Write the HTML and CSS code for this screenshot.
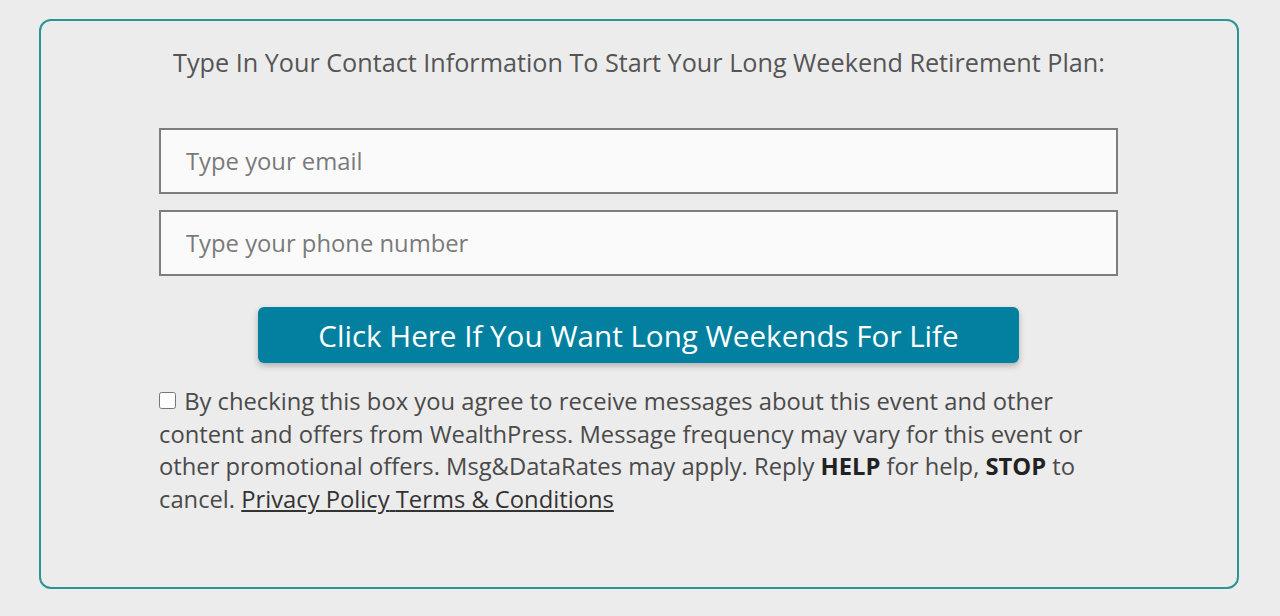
FILE: index.html
```html
<!DOCTYPE html>
<html>
<head>
<meta charset="utf-8">
<link rel="stylesheet" href="styles.css">
</head>
<body>
<div class="card">
  <p class="title">Type In Your Contact Information To Start Your Long Weekend Retirement Plan:</p>
  <form class="form">
    <input class="field" type="text" placeholder="Type your email">
    <input class="field" type="text" placeholder="Type your phone number">
    <button class="cta" type="button">Click Here If You Want Long Weekends For Life</button>
    <p class="consent"><input class="check" type="checkbox"> By checking this box you agree to receive messages about this event and other content and offers from WealthPress. Message frequency may vary for this event or other promotional offers. Msg&amp;DataRates may apply. Reply <b>HELP</b> for help, <b>STOP</b> to cancel. <span class="links"><a href="#">Privacy Policy</a> <a href="#">Terms &amp; Conditions</a></span></p>
  </form>
</div>
</body>
</html>
```
FILE: styles.css
```css
html, body {
  margin: 0;
  padding: 0;
  background: #ececec;
  font-family: "Open Sans", "Liberation Sans", sans-serif;
}
body {
  padding: 19px 41px 0 39px;
  height: 616px;
  box-sizing: border-box;
}
.card {
  box-sizing: border-box;
  width: 1200px;
  height: 570px;
  border: 2px solid #2b9591;
  border-radius: 12px;
  background: #ececec;
  display: flex;
  flex-direction: column;
  align-items: center;
}
.title {
  margin: 24px 0 0;
  font-size: 25.2px;
  line-height: 34px;
  color: #555;
  text-align: center;
  white-space: nowrap;
}
.form {
  width: 959px;
  margin: 49px 1px 0 0;
  display: flex;
  flex-direction: column;
  align-items: center;
}
.field {
  box-sizing: border-box;
  width: 100%;
  height: 66px;
  border: 2px solid #7d7d7d;
  background: #fafafa;
  padding: 0 25px;
  font-family: inherit;
  font-size: 23.8px;
  color: #555;
  outline: none;
  margin: 0 0 16px;
}
.field::placeholder {
  color: #7a7a7a;
}
.cta {
  margin-top: 15px;
  width: 761px;
  height: 56px;
  border: none;
  border-radius: 6px;
  background: #03809f;
  color: #fff;
  font-family: inherit;
  font-size: 29.6px;
  box-shadow: 0 3px 6px rgba(0,0,0,0.25);
  cursor: pointer;
}
.consent {
  align-self: stretch;
  margin: 22px 0 0;
  font-size: 23.75px;
  line-height: 32.7px;
  color: #4a4a4a;
}
.consent b {
  color: #222;
}
.links {
  color: #333;
  text-decoration: underline;
}
.links a {
  color: #333;
  text-decoration: none;
}
.check {
  width: 17px;
  height: 17px;
  margin: 0 2px 0 0;
  vertical-align: 1px;
}
```
